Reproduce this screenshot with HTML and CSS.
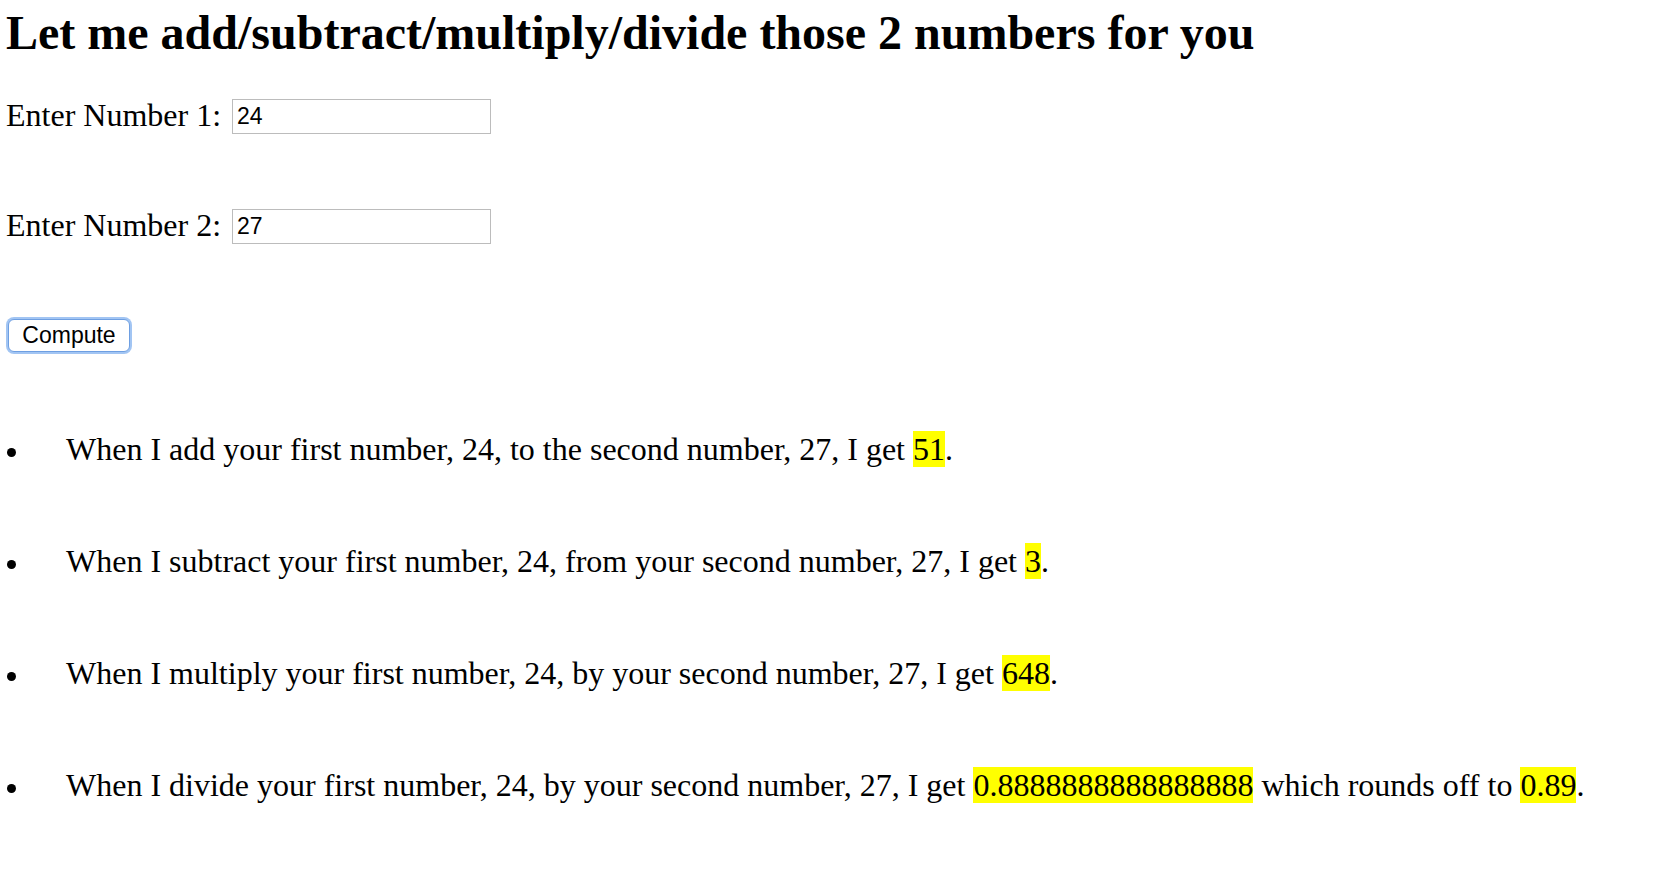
FILE: index.html
```html
<!DOCTYPE html>
<html lang="en">
<head>
<meta charset="utf-8">
<title>Calculator</title>
<link rel="stylesheet" href="styles.css">
</head>
<body>
<h2 class="title">Let me add/subtract/multiply/divide those 2 numbers for you</h2>
<div class="row row-first">
  <label class="label" for="n1">Enter Number 1:</label>
  <input class="field" id="n1" type="text" value="24">
</div>
<div class="row row-second">
  <label class="label" for="n2">Enter Number 2:</label>
  <input class="field" id="n2" type="text" value="27">
</div>
<div class="actions">
  <button class="btn" type="button">Compute</button>
</div>
<ul class="results">
  <li class="result">When I add your first number, 24, to the second number, 27, I get <span class="hl">51</span>.</li>
  <li class="result">When I subtract your first number, 24, from your second number, 27, I get <span class="hl">3</span>.</li>
  <li class="result">When I multiply your first number, 24, by your second number, 27, I get <span class="hl">648</span>.</li>
  <li class="result">When I divide your first number, 24, by your second number, 27, I get <span class="hl">0.8888888888888888</span> which rounds off to <span class="hl">0.89</span>.</li>
</ul>
</body>
</html>
```
FILE: styles.css
```css
html, body {
  background: #ffffff;
}
body {
  margin: 0;
  padding: 0 0 0 6px;
  font-family: "Liberation Serif", "Times New Roman", serif;
  font-size: 32px;
  color: #000;
}
.title {
  margin: 5px 0 0;
  font-size: 48px;
  font-weight: bold;
  line-height: 56px;
}
.row {
  display: flex;
  align-items: flex-start;
  gap: 11px;
}
.row-first {
  margin-top: 36px;
}
.row-second {
  margin-top: 73px;
}
.label {
  line-height: 37px;
}
.field {
  box-sizing: border-box;
  margin: 2px 0 0;
  width: 259px;
  height: 35px;
  padding: 0 4px;
  border: 1px solid #bcbcbc;
  font-family: "Liberation Sans", Arial, sans-serif;
  font-size: 23px;
  color: #000;
  background: #fff;
  outline: none;
}
.actions {
  display: flex;
  margin-top: 75px;
  padding-left: 2px;
}
.btn {
  box-sizing: border-box;
  width: 122px;
  height: 33px;
  margin: 0;
  padding: 0;
  border: 1px solid #6e9fe2;
  border-radius: 6px;
  box-shadow: 0 0 0 2px #a2c5f3;
  background: #fff;
  font-family: "Liberation Sans", Arial, sans-serif;
  font-size: 23px;
  line-height: 31px;
  color: #000;
}
.results {
  list-style: none;
  margin: 79px 0 0;
  padding: 0;
}
.result {
  position: relative;
  padding-left: 60px;
  line-height: 37px;
  margin-bottom: 75px;
}
.result::before {
  content: "";
  position: absolute;
  left: 1px;
  top: 17px;
  width: 9px;
  height: 9px;
  border-radius: 50%;
  background: #000;
}
.hl {
  background: #ffff00;
}
```
